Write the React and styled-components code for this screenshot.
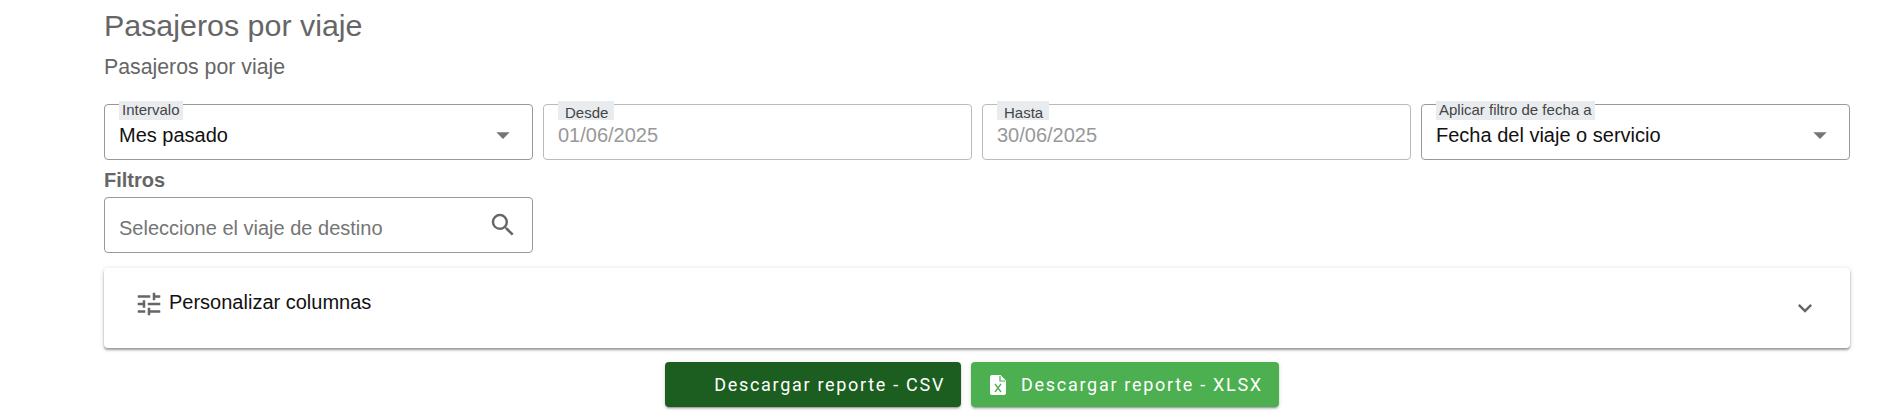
import styled, { createGlobalStyle } from 'styled-components'
import { MdArrowDropDown, MdSearch, MdTune, MdExpandMore } from 'react-icons/md'

const GlobalStyle = createGlobalStyle`
	html, body {
		margin:0;
		padding:0;
		background:#fff;
		font-family:"Liberation Sans", Arial, sans-serif;
	}
`

const Page = styled.div`
	padding:0 49px 0 104px;
	height:411px;
	overflow:hidden;
	box-sizing:border-box;
`

const Title = styled.h1`
	margin:9px 0 0;
	font-size:30.4px;
	line-height:32px;
	font-weight:400;
	color:#666;
`

const Subtitle = styled.p`
	margin:14px 0 0;
	font-size:21.3px;
	line-height:24px;
	color:#666;
`

const FieldsRow = styled.div`
	display:grid;
	grid-template-columns:repeat(4, 1fr);
	gap:10px;
	margin-top:25px;
`

const Field = styled.div`
	position:relative;
	height:56px;
	box-sizing:border-box;
	display:flex;
	align-items:center;
	justify-content:space-between;
	padding:0 ${props => props.$padRight || 13}px 0 14px;
	border:1px solid ${props => props.disabled ? '#bbb' : '#999'};
	border-radius:4px;
	background:#fff;
`

const FieldLabel = styled.span`
	position:absolute;
	left:14px;
	top:-4px;
	height:19px;
	padding:${props => props.$inset ? '3px 6px 0 7px' : '0 3px'};
	box-sizing:border-box;
	background:#e9ecef;
	font-size:15px;
	line-height:18px;
	color:#444;
	white-space:nowrap;
`

const FieldValue = styled.span`
	font-size:20px;
	line-height:24px;
	color:${props => props.disabled ? '#999' : '#111'};
	margin-top:5px;
`

const Caret = styled(MdArrowDropDown)`
	font-size:32px;
	color:#757575;
	margin-top:5px;
`

const FiltersLabel = styled.div`
	margin-top:8px;
	font-size:20px;
	line-height:24px;
	font-weight:700;
	color:#666;
`

const SearchField = styled(Field)`
	width:429px;
	margin-top:5px;
`

const Placeholder = styled.span`
	font-size:20px;
	line-height:24px;
	color:#757575;
	margin-top:5px;
`

const SearchIcon = styled(MdSearch)`
	font-size:30px;
	color:#666;
`

const Accordion = styled.div`
	margin-top:15px;
	height:80px;
	box-sizing:border-box;
	padding:16px 32px 0 30px;
	display:flex;
	align-items:flex-start;
	justify-content:space-between;
	border-radius:4px;
	background:#fff;
	box-shadow:0 2px 2px rgba(0,0,0,.3),0 1px 5px rgba(0,0,0,.18);
`

const AccordionTitle = styled.div`
	display:flex;
	align-items:center;
	gap:5px;
	font-size:20px;
	line-height:24px;
	color:#111;
`

const TuneIcon = styled(MdTune)`
	font-size:30px;
	color:#666;
	margin-top:5px;
`

const ChevronIcon = styled(MdExpandMore)`
	font-size:28px;
	color:#666;
	margin:10px -1px 0 0;
`

const Buttons = styled.div`
	display:flex;
	justify-content:center;
	gap:10px;
	margin-top:14px;
	padding-right:10px;
`

const DownloadButton = styled.button`
	display:flex;
	align-items:center;
	gap:14px;
	height:45px;
	padding:0 16px 0 ${props => props.$pad}px;
	border:none;
	border-radius:4px;
	background:${props => props.$color};
	color:#fff;
	font-family:Roboto, sans-serif;
	font-size:18px;
	font-weight:400;
	letter-spacing:1.7px;
	box-shadow:0 3px 1px -2px rgba(0,0,0,.2),0 2px 2px 0 rgba(0,0,0,.14),0 1px 5px 0 rgba(0,0,0,.12);
`

// thin x on a white sheet, the react-icons excel file has a heavier one
function ExcelIcon(){
	return(
		<svg width="17" height="20" viewBox="0 0 17 20">
			<path d="M2 0h8.5L16 5.5V18a2 2 0 0 1-2 2H2a2 2 0 0 1-2-2V2a2 2 0 0 1 2-2z" fill="#fff" />
			<path d="M10 1v5h5" fill="none" stroke="#4caf50" strokeWidth="1.2" />
			<path d="M5 9l6 8M11 9l-6 8" fill="none" stroke="#4caf50" strokeWidth="1.3" />
		</svg>
	)
}

function App(){
	return(
		<Page>
			<GlobalStyle />
			<Title>Pasajeros por viaje</Title>
			<Subtitle>Pasajeros por viaje</Subtitle>

			<FieldsRow>
				<Field>
					<FieldLabel>Intervalo</FieldLabel>
					<FieldValue>Mes pasado</FieldValue>
					<Caret />
				</Field>
				<Field disabled>
					<FieldLabel $inset>Desde</FieldLabel>
					<FieldValue disabled>01/06/2025</FieldValue>
				</Field>
				<Field disabled>
					<FieldLabel $inset>Hasta</FieldLabel>
					<FieldValue disabled>30/06/2025</FieldValue>
				</Field>
				<Field>
					<FieldLabel>Aplicar filtro de fecha a</FieldLabel>
					<FieldValue>Fecha del viaje o servicio</FieldValue>
					<Caret />
				</Field>
			</FieldsRow>

			<FiltersLabel>Filtros</FiltersLabel>
			<SearchField $padRight={14}>
				<Placeholder>Seleccione el viaje de destino</Placeholder>
				<SearchIcon />
			</SearchField>

			<Accordion>
				<AccordionTitle>
					<TuneIcon />
					Personalizar columnas
				</AccordionTitle>
				<ChevronIcon />
			</Accordion>

			<Buttons>
				<DownloadButton $color="#1b5e20" $pad={49}>Descargar reporte - CSV</DownloadButton>
				<DownloadButton $color="#4caf50" $pad={19}><ExcelIcon />Descargar reporte - XLSX</DownloadButton>
			</Buttons>
		</Page>
	)
}

export default App
